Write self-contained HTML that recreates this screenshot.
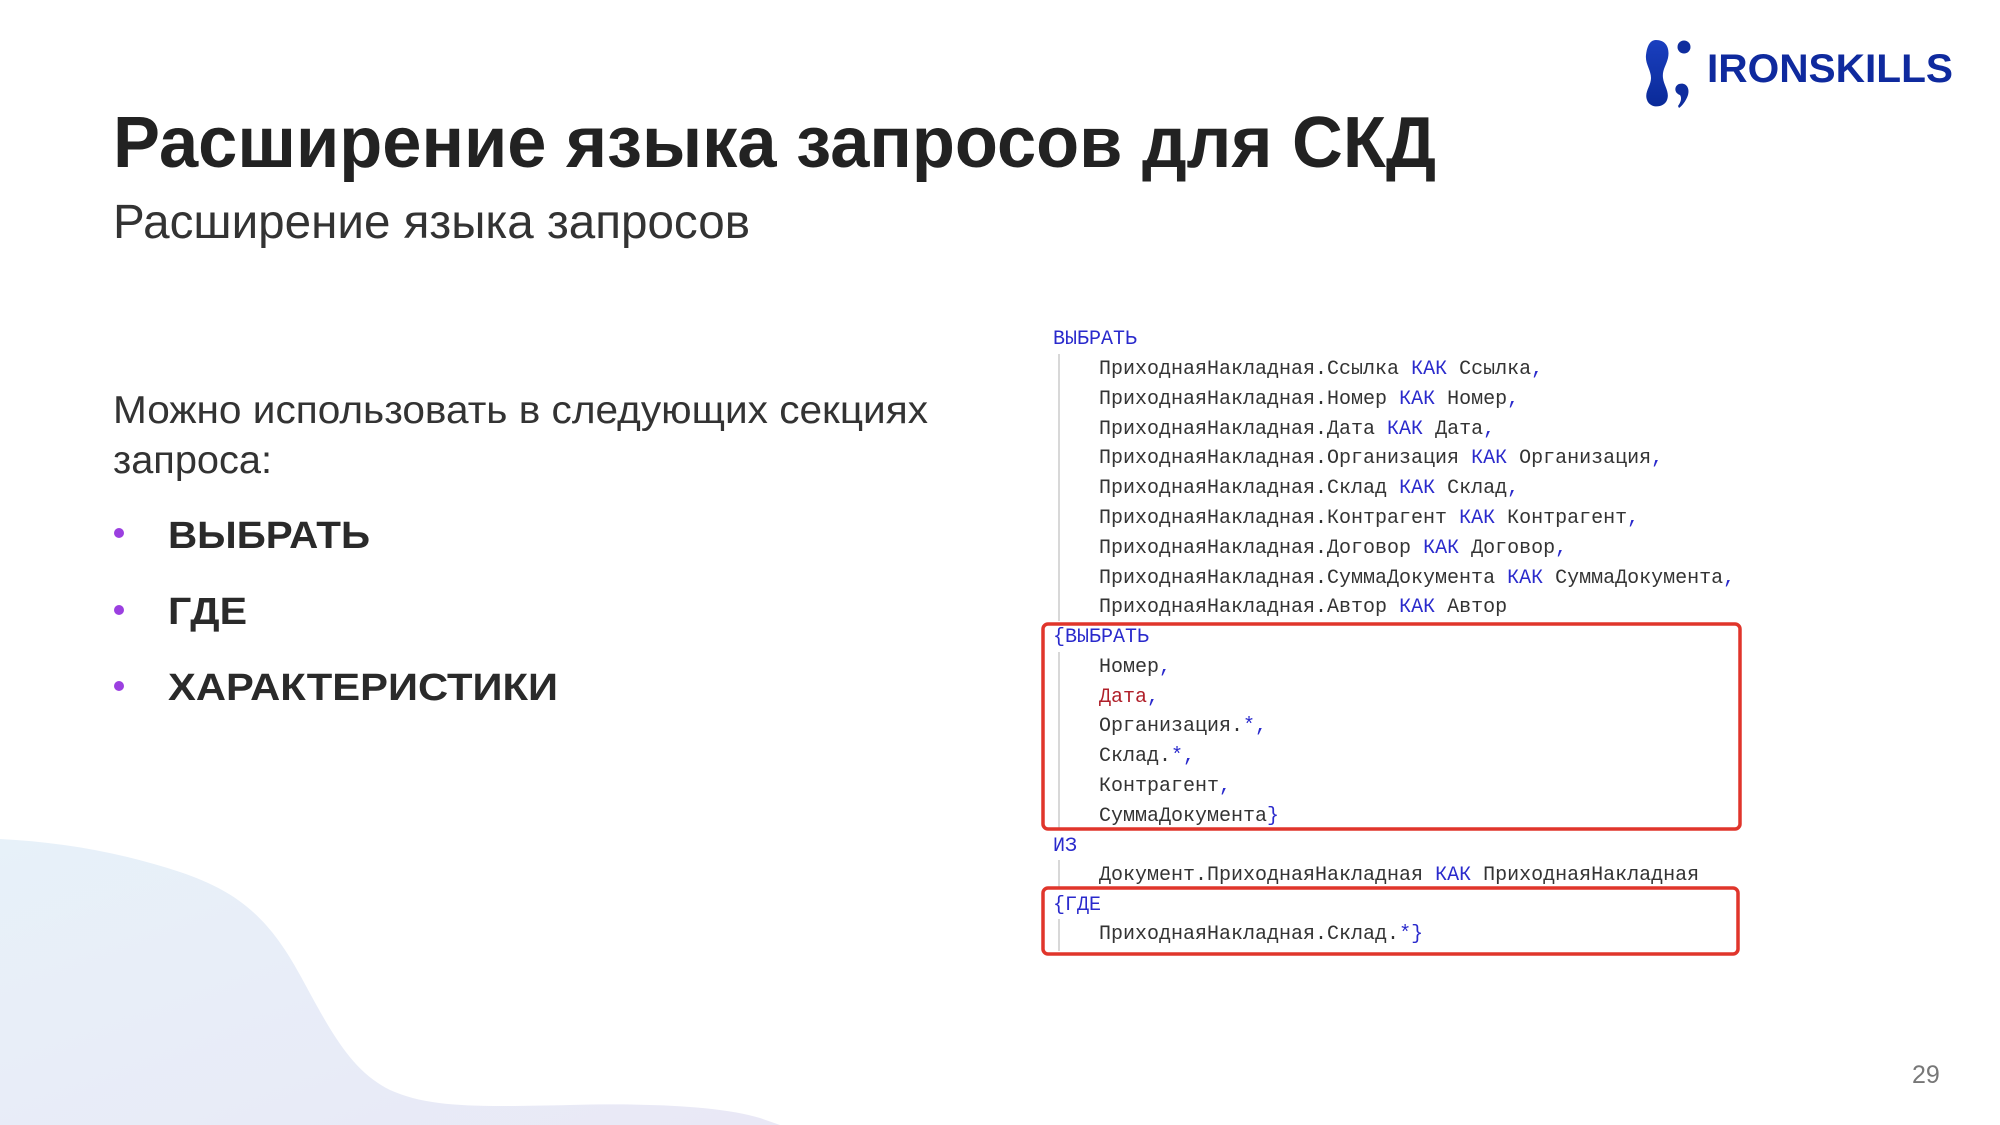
<!DOCTYPE html>
<html><head><meta charset="utf-8"><style>
html,body{margin:0;padding:0;background:#fff}
svg{display:block}
</style></head><body>
<svg width="2000" height="1125" viewBox="0 0 2000 1125" xmlns="http://www.w3.org/2000/svg">
<defs>
<linearGradient id="bg" x1="0" y1="0" x2="1" y2="1">
<stop offset="0" stop-color="#e7f1f9"/><stop offset="1" stop-color="#e9e8f6"/>
</linearGradient>
<linearGradient id="lg" x1="0" y1="0" x2="0" y2="1">
<stop offset="0" stop-color="#1a3fbf"/><stop offset="1" stop-color="#0a2a98"/>
</linearGradient>
</defs>
<path d="M0 839 C60 842 120 852 180 872 C240 892 270 920 300 975 C330 1030 350 1070 390 1090 C430 1108 480 1107 570 1105 C650 1103 720 1106 760 1118 L780 1125 L0 1125 Z" fill="url(#bg)"/>

<g font-family="'Liberation Sans','Noto Sans CJK SC',sans-serif" fill="#222">
<text x="113" y="167" font-size="72" font-weight="bold" textLength="1323" lengthAdjust="spacingAndGlyphs">Расширение языка запросов для СКД</text>
<text x="113" y="238" font-size="48" fill="#333" textLength="637" lengthAdjust="spacingAndGlyphs">Расширение языка запросов</text>
<text x="113" y="423" font-size="39" fill="#333" textLength="815" lengthAdjust="spacingAndGlyphs">Можно использовать в следующих секциях</text>
<text x="113" y="473" font-size="39" fill="#333" textLength="159" lengthAdjust="spacingAndGlyphs">запроса:</text>
<circle cx="119" cy="533" r="5" fill="#9b3fe0"/>
<circle cx="119" cy="610" r="5" fill="#9b3fe0"/>
<circle cx="119" cy="686" r="5" fill="#9b3fe0"/>
<text x="168" y="548" font-size="38" font-weight="bold" fill="#2a2a2a" textLength="202" lengthAdjust="spacingAndGlyphs">ВЫБРАТЬ</text>
<text x="168" y="624" font-size="38" font-weight="bold" fill="#2a2a2a" textLength="79" lengthAdjust="spacingAndGlyphs">ГДЕ</text>
<text x="168" y="700" font-size="38" font-weight="bold" fill="#2a2a2a" textLength="390" lengthAdjust="spacingAndGlyphs">ХАРАКТЕРИСТИКИ</text>
<text x="1912" y="1083" font-size="25" fill="#777">29</text>
</g>

<!-- logo -->
<path d="M1656 40 C1666 40 1670 48 1668 58 C1666 66 1662 70 1663 78 C1664 86 1670 92 1667 100 C1664 108 1650 109 1647 100 C1644 92 1651 86 1651 78 C1651 70 1645 64 1646 55 C1647 46 1650 40 1656 40 Z" fill="url(#lg)"/>
<circle cx="1684" cy="47" r="6.5" fill="#0f2d9e"/>
<path d="M1679 84 C1686 82 1690 88 1688 95 C1686 101 1682 106 1679 108 L1678 106 C1681 102 1682 98 1680 95 C1674 93 1674 86 1679 84 Z" fill="#0f2d9e"/>
<text x="1707" y="82" font-family="'Liberation Sans',sans-serif" font-size="40" font-weight="bold" fill="#0f2a9e" textLength="246" lengthAdjust="spacingAndGlyphs">IRONSKILLS</text>

<g transform="translate(-3,-1)">
<g stroke="#d8d8d8" stroke-width="2">
<line x1="1062" y1="355" x2="1062" y2="622"/>
<line x1="1062" y1="653" x2="1062" y2="830"/>
<line x1="1062" y1="861" x2="1062" y2="890"/>
<line x1="1062" y1="920" x2="1062" y2="952"/>
</g>
<g font-family="'Liberation Mono',monospace" font-size="20" fill="#333">
<g fill="#2a2acc">
<text x="1056" y="345">ВЫБРАТЬ</text>
<text x="1056" y="643">{ВЫБРАТЬ</text>
<text x="1056" y="852">ИЗ</text>
<text x="1056" y="911">{ГДЕ</text>
</g>
<text x="1102" y="375" xml:space="preserve">ПриходнаяНакладная.Ссылка <tspan fill="#2a2acc">КАК</tspan> Ссылка<tspan fill="#2a2acc">,</tspan></text>
<text x="1102" y="405" xml:space="preserve">ПриходнаяНакладная.Номер <tspan fill="#2a2acc">КАК</tspan> Номер<tspan fill="#2a2acc">,</tspan></text>
<text x="1102" y="435" xml:space="preserve">ПриходнаяНакладная.Дата <tspan fill="#2a2acc">КАК</tspan> Дата<tspan fill="#2a2acc">,</tspan></text>
<text x="1102" y="464" xml:space="preserve">ПриходнаяНакладная.Организация <tspan fill="#2a2acc">КАК</tspan> Организация<tspan fill="#2a2acc">,</tspan></text>
<text x="1102" y="494" xml:space="preserve">ПриходнаяНакладная.Склад <tspan fill="#2a2acc">КАК</tspan> Склад<tspan fill="#2a2acc">,</tspan></text>
<text x="1102" y="524" xml:space="preserve">ПриходнаяНакладная.Контрагент <tspan fill="#2a2acc">КАК</tspan> Контрагент<tspan fill="#2a2acc">,</tspan></text>
<text x="1102" y="554" xml:space="preserve">ПриходнаяНакладная.Договор <tspan fill="#2a2acc">КАК</tspan> Договор<tspan fill="#2a2acc">,</tspan></text>
<text x="1102" y="584" xml:space="preserve">ПриходнаяНакладная.СуммаДокумента <tspan fill="#2a2acc">КАК</tspan> СуммаДокумента<tspan fill="#2a2acc">,</tspan></text>
<text x="1102" y="613" xml:space="preserve">ПриходнаяНакладная.Автор <tspan fill="#2a2acc">КАК</tspan> Автор</text>
<text x="1102" y="673">Номер<tspan fill="#2a2acc">,</tspan></text>
<text x="1102" y="703" fill="#b0202a">Дата<tspan fill="#2a2acc">,</tspan></text>
<text x="1102" y="732">Организация.<tspan fill="#2a2acc">*,</tspan></text>
<text x="1102" y="762">Склад.<tspan fill="#2a2acc">*,</tspan></text>
<text x="1102" y="792">Контрагент<tspan fill="#2a2acc">,</tspan></text>
<text x="1102" y="822">СуммаДокумента<tspan fill="#2a2acc">}</tspan></text>
<text x="1102" y="881" xml:space="preserve">Документ.ПриходнаяНакладная <tspan fill="#2a2acc">КАК</tspan> ПриходнаяНакладная</text>
<text x="1102" y="940">ПриходнаяНакладная.Склад.<tspan fill="#2a2acc">*}</tspan></text>
</g>
</g>
<rect x="1043" y="624" width="697" height="205" rx="5" fill="none" stroke="#e0352b" stroke-width="3.5"/>
<rect x="1043" y="888" width="695" height="66" rx="5" fill="none" stroke="#e0352b" stroke-width="3.5"/>
</svg>
</body></html>
